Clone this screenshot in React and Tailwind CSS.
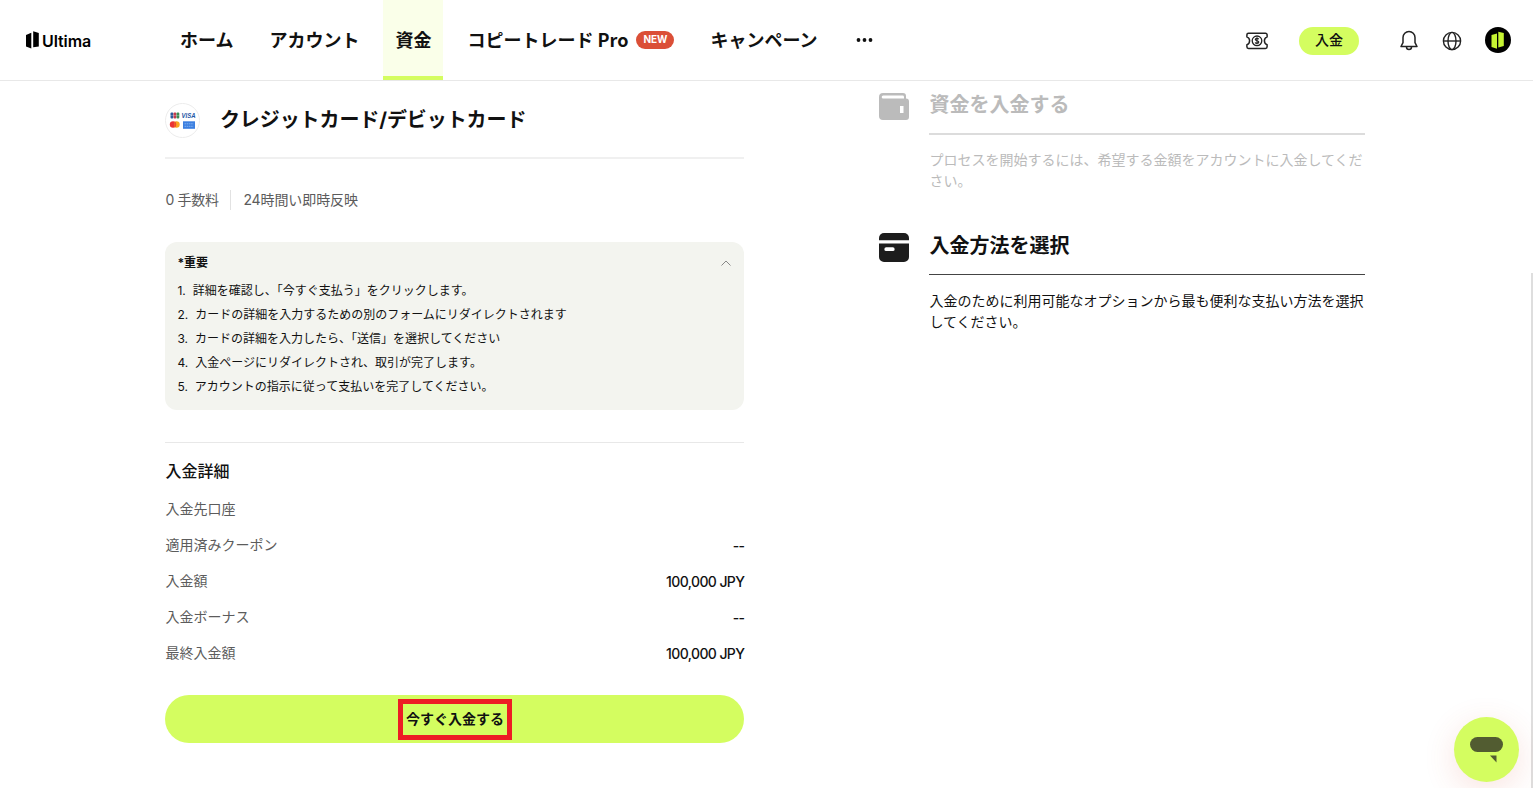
import { useState } from "react";

const navItems = [
    { label: "ホーム" },
    { label: "アカウント" },
    { label: "資金", active: true },
    { label: "コピートレード Pro", badge: "NEW" },
    { label: "キャンペーン" },
];

const notes = [
    "詳細を確認し、「今すぐ支払う」をクリックします。",
    "カードの詳細を入力するための別のフォームにリダイレクトされます",
    "カードの詳細を入力したら、「送信」を選択してください",
    "入金ページにリダイレクトされ、取引が完了します。",
    "アカウントの指示に従って支払いを完了してください。",
];

const details = [
    { label: "入金先口座", value: "" },
    { label: "適用済みクーポン", value: "--" },
    { label: "入金額", value: "100,000 JPY" },
    { label: "入金ボーナス", value: "--" },
    { label: "最終入金額", value: "100,000 JPY" },
];

function Logo() {
    return (
        <div className="flex w-[142px] items-center gap-[3px]">
            <svg width="13" height="18" viewBox="0 0 13 18">
                <path d="M0 4 5.3 1.7v15.8L0 15.6z" fill="#000" />
                <path d="M7.2.2 12.8 2v13.4l-5.600.9z" fill="#000" />
            </svg>
            <span className="pt-[2px] font-['Inter'] text-[16px] leading-5 font-semibold tracking-[-0.1px] text-black">Ultima</span>
        </div>
    );
}

function CouponIcon() {
    return (
        <svg width="22" height="18" viewBox="0 0 22 18" fill="none" stroke="#222" strokeWidth="1.5">
            <path d="M2.5 1.2h17a1.6 1.6 0 0 1 1.6 1.6v2.1c-1.8.6-2.7 2.1-2.7 3.9s.9 3.3 2.7 3.9v2.1a1.6 1.6 0 0 1-1.6 1.6h-17a1.6 1.6 0 0 1-1.6-1.6v-2.1c1.8-.6 2.7-2.1 2.7-3.9S2.7 5.5.9 4.9V2.8a1.6 1.6 0 0 1 1.6-1.6z" strokeLinejoin="round" />
            <circle cx="11" cy="8.8" r="4.8" strokeWidth="1.3" />
            <path d="M12.7 7.3c-.3-.7-.9-1-1.7-1-1 0-1.7.5-1.7 1.2 0 1.7 3.5.8 3.5 2.6 0 .8-.8 1.3-1.8 1.3-.9 0-1.6-.4-1.8-1.1M11 5.3v7" strokeWidth="1.2" />
        </svg>
    );
}

function BellIcon() {
    return (
        <svg width="20" height="21" viewBox="0 0 20 21" fill="none" stroke="#222" strokeWidth="1.5" strokeLinejoin="round" strokeLinecap="round">
            <path d="M10 1.5a6 6 0 0 0-6 6v5.2l-2 3.8h16l-2-3.8V7.5a6 6 0 0 0-6-6z" />
            <path d="M7.5 17a2.5 2.5 0 0 0 5 0" />
        </svg>
    );
}

function GlobeIcon() {
    return (
        <svg width="20" height="20" viewBox="0 0 20 20" fill="none" stroke="#222" strokeWidth="1.4">
            <circle cx="10" cy="10" r="8.6" />
            <ellipse cx="10" cy="10" rx="4" ry="8.6" />
            <path d="M1.4 10h17.2" />
        </svg>
    );
}

function Avatar() {
    return (
        <svg className="-mt-px" width="26" height="26" viewBox="0 0 26 26">
            <circle cx="13" cy="13" r="13" fill="#000" />
            <path d="M6.5 8 12 6.5v15.2L6.5 20zM13.3 4.8 18.8 6v13l-5.5 1.4z" fill="#c6f432" />
        </svg>
    );
}

function CardBrands() {
    return (
        <svg width="35" height="35" viewBox="0 0 35 35">
            <circle cx="17.5" cy="17.5" r="17" fill="#fff" stroke="#ececec" />
            <rect x="5.5" y="9.5" width="2.8" height="6" rx="1" fill="#2c5a9c" />
            <rect x="8.5" y="9.5" width="2.8" height="6" rx="1" fill="#c43a4c" />
            <rect x="11.5" y="9.5" width="2.8" height="6" rx="1" fill="#3b8b52" />
            <path d="M5.5 12.5h8.8" stroke="#fff" strokeWidth=".5" strokeDasharray="1 1" />
            <text x="16.5" y="15" fontSize="6.6" textLength="14" lengthAdjust="spacingAndGlyphs" fontFamily="Liberation Sans" fontWeight="700" fontStyle="italic" fill="#1b56a5">VISA</text>
            <circle cx="11.5" cy="21.5" r="3.2" fill="#f9a51f" />
            <circle cx="8" cy="21.5" r="3.2" fill="#e93435" />
            <path d="M9.8 19v5" stroke="#f26722" strokeWidth="1.3" />
            <rect x="18" y="18.300" width="12" height="7.5" fill="#3c7fe0" />
            <path d="M19.5 20.8h9M19.5 23.3h9" stroke="#7fb0f0" strokeWidth="1" strokeDasharray="1.6 .6" />
        </svg>
    );
}

function WalletIcon() {
    return (
        <svg width="30" height="28" viewBox="0 0 30 28">
            <path fillRule="evenodd" d="M4 0h20a3 3 0 0 1 3 3v2.5a3 3 0 0 1 3 3V24a3 3 0 0 1-3 3H4a4 4 0 0 1-4-4V4a4 4 0 0 1 4-4zm.2 2.6a1.5 1.5 0 0 0 0 3H25V4a1.4 1.4 0 0 0-1.400-1.400zM21 13v7h3.500v-7z" fill="#bbb" />
        </svg>
    );
}

function CardIcon() {
    return (
        <svg width="30" height="29" viewBox="0 0 30 29">
            <path d="M0 7.3V5a5 5 0 0 1 5-5h20a5 5 0 0 1 5 5v2.3z" fill="#1d1d1d" />
            <path fillRule="evenodd" d="M0 10.5h30V24a5 5 0 0 1-5 5H5a5 5 0 0 1-5-5zM7.2 14.3a1.8 1.8 0 0 0 0 3.7h6.6a1.8 1.8 0 0 0 0-3.7z" fill="#1d1d1d" />
        </svg>
    );
}

function Header() {
    return (
        <header className="flex h-[81px] shrink-0 items-center border-b border-[#e8e8e8] bg-white pr-[22px] pl-[26px]">
            <Logo />
            <nav className="flex h-20 gap-3 font-['Noto_Sans_CJK_JP',sans-serif]">
                {navItems.map((item) => (
                    <a
                        key={item.label}
                        className={
                            item.active
                                ? "flex h-20 items-center border-b-4 border-[#d4fd60] bg-[#faffe9] px-3 pt-[2px] text-[18px] font-bold"
                                : "flex h-20 items-center px-3 pb-[2px] text-[18px] font-bold"
                        }
                    >
                        {item.label}
                        {item.badge && (
                            <span className="mt-px ml-2 flex h-[18px] w-[38px] items-center justify-center rounded-full bg-[#db4f37] font-['Inter'] text-[10px] font-bold text-white">
                                {item.badge}
                            </span>
                        )}
                    </a>
                ))}
            </nav>
            <svg className="ml-[26px]" width="18" height="4" viewBox="0 0 18 4" fill="#111">
                <circle cx="2.5" cy="2" r="1.9" />
                <circle cx="8.5" cy="2" r="1.9" />
                <circle cx="14.5" cy="2" r="1.9" />
            </svg>
            <div className="ml-auto flex items-center pt-px">
                <CouponIcon />
                <button className="ml-[31px] h-7 w-[60px] rounded-full bg-[#d4fd60] pb-[2px] text-[14px] font-medium">入金</button>
                <div className="ml-10 flex items-center gap-[23px]">
                    <BellIcon />
                    <GlobeIcon />
                    <Avatar />
                </div>
            </div>
        </header>
    );
}

function Step({ icon, title, text, muted }) {
    return (
        <section className={muted ? "flex h-[141px] gap-5 text-[#bbb]" : "flex h-[141px] gap-5"}>
            <div className={muted ? "pt-3" : "pt-[11px]"}>{icon}</div>
            <div className="w-[436px]">
                <h2 className="pt-[10px] pb-[13px] text-[20px] leading-[29px] font-bold">{title}</h2>
                <div className={muted ? "h-[2px] bg-[#dcdcdc]" : "h-px bg-[#444]"} />
                <p className={muted ? "mt-[14px] text-[14px] leading-[21px]" : "mt-[15px] text-[14px] leading-[21px]"}>{text}</p>
            </div>
        </section>
    );
}

export default function App() {
    const [open, setOpen] = useState(true);

    return (
        <div lang="ja" className="relative flex h-[788px] w-[1533px] flex-col overflow-hidden bg-white font-['Inter','Noto_Sans_CJK_JP',sans-serif] text-[#111]">
            <Header />

            <main className="flex flex-1 pl-[165.4px]">
                <div className="w-[579px] shrink-0">
                    {/* Payment method */}
                    <div className="flex h-[78px] items-center gap-[19.5px] border-b-2 border-[#f0f0f0] pt-[2px]">
                        <CardBrands />
                        <h1 className="text-[20px] font-bold tracking-[-0.08px]">クレジットカード/デビットカード</h1>
                    </div>
                    <div className="mt-[31px] flex h-5 items-center text-[14px] leading-5 text-[#5c5c5c]">
                        <span className="w-[66px] border-r border-[#e2e2e2] tracking-[-0.3px]">0 手数料</span>
                        <span className="pl-3 tracking-[-0.1px]">24時間い即時反映</span>
                    </div>

                    {/* Important notes */}
                    <div className="mt-8 h-[168px] rounded-xl bg-[#f3f4ef] px-3 pt-[10px] text-[12px]">
                        <button onClick={() => setOpen(!open)} className="flex h-5 w-full items-center justify-between pt-px font-bold">
                            <span>*重要</span>
                            <svg className="mr-px" width="10" height="6" viewBox="0 0 10 6" fill="none" stroke="#888">
                                <path d="M.5 5.5 5 1l4.5 4.5" />
                            </svg>
                        </button>
                        {open && (
                            <ol className="pt-[7px]">
                                {notes.map((note, i) => (
                                    <li key={note} className="flex h-6 items-center gap-[7px]">
                                        <span>{i + 1}.</span>
                                        <span>{note}</span>
                                    </li>
                                ))}
                            </ol>
                        )}
                    </div>

                    {/* Deposit details */}
                    <div className="mt-8 border-t border-[#e8e8e8] pt-4">
                        <h3 className="text-[16px] leading-6 font-medium">入金詳細</h3>
                        <dl className="mt-[7px]">
                            {details.map((row) => (
                                <div key={row.label} className="flex h-9 items-center justify-between text-[14px]">
                                    <dt className="text-[#5c5c5c]">{row.label}</dt>
                                    <dd className="pt-[2px] font-medium tracking-[-0.6px]">{row.value}</dd>
                                </div>
                            ))}
                        </dl>
                    </div>

                    <button className="relative mt-[25px] h-12 w-full rounded-full bg-[#d4fd60] pb-[2px] text-[14px] font-bold">
                        今すぐ入金する
                        <span className="absolute top-[4px] left-[232.6px] h-[41px] w-[114px] border-[5px] border-[#ed1c24]" />
                    </button>
                </div>

                <aside className="ml-[135px]">
                    <Step icon={<WalletIcon />} title="資金を入金する" text="プロセスを開始するには、希望する金額をアカウントに入金してください。" muted />
                    <Step icon={<CardIcon />} title="入金方法を選択" text="入金のために利用可能なオプションから最も便利な支払い方法を選択してください。" />
                </aside>
            </main>

            {/* Scrollbar */}
            <div className="absolute top-[273px] right-0 h-[515px] w-[2px] bg-[#dedede]" />

            {/* Chat */}
            <button className="absolute top-[717.4px] left-[1453.5px] flex h-[65px] w-[65px] items-center justify-center rounded-full bg-[#d4fd60] shadow-[0_8px_32px_rgba(219,79,55,0.16)]">
                <svg width="33" height="26" viewBox="0 0 33 26" fill="#525c31">
                    <rect x="0" y="0" width="33" height="15" rx="7.5" />
                    <path d="M20 18.5h6.5v7z" />
                </svg>
            </button>
        </div>
    );
}
